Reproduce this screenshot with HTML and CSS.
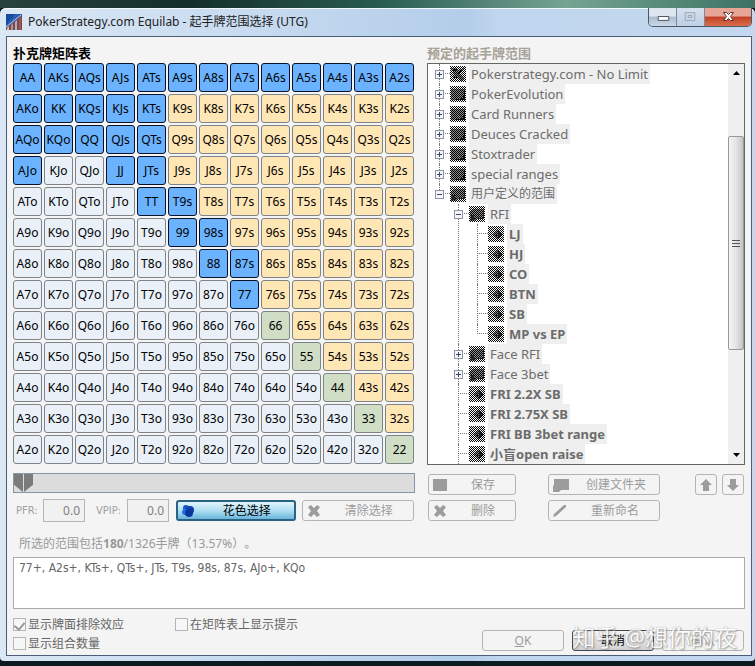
FILE: index.html
```html
<!DOCTYPE html>
<html lang="zh-CN">
<head>
<meta charset="utf-8">
<title>PokerStrategy.com Equilab</title>
<link rel="stylesheet" href="styles.css">
</head>
<body>
<svg class="defs" aria-hidden="true">
  <defs>
    <pattern id="dither" width="2" height="2" patternUnits="userSpaceOnUse">
      <path d="M0 0h1v1H0zM1 1h1v1H1z" fill="#000"/>
      <path d="M1 0h1v1H1zM0 1h1v1H0z" fill="#fff"/>
    </pattern>
    <pattern id="dither-dark" width="2" height="2" patternUnits="userSpaceOnUse">
      <path d="M0 0h1v1H0zM1 1h1v1H1z" fill="#000"/>
      <path d="M1 0h1v1H1zM0 1h1v1H0z" fill="#8c8c8c"/>
    </pattern>
    <symbol id="i-root" viewBox="0 0 16 16">
      <path d="M0 0h16v16H0z" fill="url(#dither)"/>
      <path d="M1 2h5l2 2 6-2-4 6 4 5-3 2-4-4-5 2 2-5z" fill="url(#dither-dark)"/>
      <path d="M3 3h4v2H3zM7 8l4-4 1 1-4 4zM4 11h3v1H4z" fill="#111"/>
    </symbol>
    <symbol id="i-folder" viewBox="0 0 16 16">
      <path d="M0 0h16v16H0z" fill="url(#dither)"/>
      <path d="M1 3h14v11H1z" fill="url(#dither-dark)"/>
      <path d="M14 5h1v9H5v-1h5v-1h3v-2h1z" fill="#111"/>
    </symbol>
    <symbol id="i-user" viewBox="0 0 16 16">
      <path d="M0 0h16v16H0z" fill="url(#dither)"/>
      <path d="M1 6l3-3h11v10H7l-2 2H1z" fill="url(#dither-dark)"/>
      <path d="M14 5h1v8H8v-1h6zM2 9h3v2h1v3H2z" fill="#222"/>
    </symbol>
    <symbol id="i-range" viewBox="0 0 16 16">
      <path d="M0 0h16v16H0z" fill="url(#dither)"/>
      <path d="M9 3l5 5-5 6-5-6z" fill="url(#dither-dark)"/>
      <path d="M10 5l4 3-4 5v-3H8V9h2z" fill="#222"/>
    </symbol>
  </defs>
</svg>

<div class="window">
  <header class="titlebar">
    <svg class="app-icon" viewBox="0 0 16 16" aria-hidden="true">
      <path d="M0 0h16v16H0z" fill="#2a5fb4"/>
      <path d="M0 0h9L0 11z" fill="#174a9c"/>
      <path d="M0 16v-2l16-13v15z" fill="#59546b"/>
      <path d="M1 14l2-2v4H1z" fill="#e7b6a3"/>
      <path d="M5 11l2-2v7H5z" fill="#d9826c"/>
      <path d="M9 8l2-2v10H9z" fill="#c6a7a8"/>
      <path d="M13 5l2-2v13h-2z" fill="#c04b36"/>
      <path d="M0 13L15 1" stroke="#b7c9e8"/>
    </svg>
    <h1 class="caption">PokerStrategy.com Equilab - 起手牌范围选择 (UTG)</h1>
    <div class="window-buttons">
      <button class="wb" aria-label="最小化"><svg viewBox="0 0 28 18"><path d="M9.500 8.500h11v4h-11z" fill="#fff" stroke="#46505e"/></svg></button>
      <button class="wb" aria-label="最大化" disabled><svg viewBox="0 0 28 18"><path d="M8.500 4.500h10v8h-10zM11.500 7.500h4v2h-4z" fill="#cfd9e6" stroke="#98a4b5"/></svg></button>
      <button class="wb wb-close" aria-label="关闭"><svg viewBox="0 0 46 18"><path d="M18.500 4.500h3l2 2 2-2h3l-3 4 3 4h-3l-2-2-2 2h-3l3-4z" fill="#fff" stroke="#5b3033"/></svg></button>
    </div>
  </header>

  <main class="client">
    <div class="columns">
      <section class="left">
        <h2>扑克牌矩阵表</h2>
        <div class="matrix" id="matrix"></div>
        <div class="slider">
          <input type="range" aria-label="PFR 范围" class="lower" min="0" max="100" value="0" disabled>
          <input type="range" aria-label="VPIP 范围" class="upper" min="0" max="100" value="0" disabled>
        </div>
        <div class="stats">
          <label for="pfr">PFR:</label><input id="pfr" type="text" value="0.0" disabled>
          <label for="vpip" class="second">VPIP:</label><input id="vpip" type="text" value="0.0" disabled>
          <button class="btn suits"><svg viewBox="0 0 14 14" aria-hidden="true"><circle cx="5" cy="4" r="3" fill="#1456c8"/><circle cx="9" cy="6" r="4" fill="#0d3fae"/><circle cx="4" cy="8" r="3" fill="#2470dc"/><circle cx="8" cy="9" r="4" fill="#08389c"/></svg><span>花色选择</span></button>
          <button class="btn clear" disabled><svg viewBox="0 0 14 14" aria-hidden="true"><path d="M1 3l3-2 3 3 3-3 3 2-3 4 3 4-3 2-3-3-3 3-3-2 3-4z"/></svg><span>清除选择</span></button>
        </div>
      </section>

      <section class="right">
        <h2 class="muted">预定的起手牌范围</h2>
        <div class="tree-box">
          <ul class="tree">
            <li><div class="node"><button class="toggle" aria-label="展开"></button><svg><use href="#i-root"/></svg><span>Pokerstrategy.com - No Limit</span></div></li>
            <li><div class="node"><button class="toggle" aria-label="展开"></button><svg><use href="#i-folder"/></svg><span>PokerEvolution</span></div></li>
            <li><div class="node"><button class="toggle" aria-label="展开"></button><svg><use href="#i-folder"/></svg><span>Card Runners</span></div></li>
            <li><div class="node"><button class="toggle" aria-label="展开"></button><svg><use href="#i-folder"/></svg><span>Deuces Cracked</span></div></li>
            <li><div class="node"><button class="toggle" aria-label="展开"></button><svg><use href="#i-folder"/></svg><span>Stoxtrader</span></div></li>
            <li><div class="node"><button class="toggle" aria-label="展开"></button><svg><use href="#i-folder"/></svg><span>special ranges</span></div></li>
            <li><div class="node"><button class="toggle open" aria-label="折叠"></button><svg><use href="#i-user"/></svg><span class="cjk">用户定义的范围</span></div>
              <ul>
                <li><div class="node"><button class="toggle open" aria-label="折叠"></button><svg><use href="#i-user"/></svg><span>RFI</span></div>
                  <ul>
                    <li><div class="node leaf"><svg><use href="#i-range"/></svg><span>LJ</span></div></li>
                    <li><div class="node leaf"><svg><use href="#i-range"/></svg><span>HJ</span></div></li>
                    <li><div class="node leaf"><svg><use href="#i-range"/></svg><span>CO</span></div></li>
                    <li><div class="node leaf"><svg><use href="#i-range"/></svg><span>BTN</span></div></li>
                    <li><div class="node leaf"><svg><use href="#i-range"/></svg><span>SB</span></div></li>
                    <li><div class="node leaf"><svg><use href="#i-range"/></svg><span>MP vs EP</span></div></li>
                  </ul>
                </li>
                <li><div class="node"><button class="toggle" aria-label="展开"></button><svg><use href="#i-user"/></svg><span>Face RFI</span></div></li>
                <li><div class="node"><button class="toggle" aria-label="展开"></button><svg><use href="#i-user"/></svg><span>Face 3bet</span></div></li>
                <li><div class="node leaf"><svg><use href="#i-range"/></svg><span>FRI 2.2X SB</span></div></li>
                <li><div class="node leaf"><svg><use href="#i-range"/></svg><span>FRI 2.75X SB</span></div></li>
                <li><div class="node leaf"><svg><use href="#i-range"/></svg><span>FRI BB 3bet range</span></div></li>
                <li class="continues"><div class="node leaf"><svg><use href="#i-range"/></svg><span>小盲open raise</span></div></li>
              </ul>
            </li>
          </ul>
          <div class="scrollbar">
            <button aria-label="向上滚动"><svg viewBox="0 0 7 4"><path d="M0 4l3.500-4L7 4z"/></svg></button>
            <div class="track"><div class="thumb"><svg viewBox="0 0 8 9"><path d="M0 1.500h8M0 4.500h8M0 7.500h8" stroke="#555"/></svg></div></div>
            <button aria-label="向下滚动"><svg viewBox="0 0 7 4"><path d="M0 0l3.500 4L7 0z"/></svg></button>
          </div>
        </div>
        <div class="actions">
          <button class="btn" disabled><svg viewBox="0 0 14 14" aria-hidden="true"><path d="M0 1h14v12H0z"/></svg><span>保存</span></button>
          <button class="btn" disabled><svg class="wide" viewBox="0 0 16 14" aria-hidden="true"><path d="M1 1h15v11H8l-2 2H0V8l1-1z"/></svg><span>创建文件夹</span></button>
          <div class="arrows">
            <button class="btn square" aria-label="上移" disabled><svg viewBox="0 0 14 14"><path d="M7 1l6 6h-3v6H4V7H1z"/></svg></button>
            <button class="btn square" aria-label="下移" disabled><svg viewBox="0 0 14 14"><path d="M7 13l6-6h-3V1H4v6H1z"/></svg></button>
          </div>
          <button class="btn" disabled><svg viewBox="0 0 14 14" aria-hidden="true"><path d="M1 3l3-2 3 3 3-3 3 2-3 4 3 4-3 2-3-3-3 3-3-2 3-4z"/></svg><span>删除</span></button>
          <button class="btn" disabled><svg viewBox="0 0 14 14" aria-hidden="true"><path d="M0 13l1-3L11 1h2v2L3 12z"/></svg><span>重新命名</span></button>
        </div>
      </section>
    </div>

    <p class="summary">所选的范围包括<b>180</b>/1326手牌（13.57%）。</p>
    <textarea class="range-text" aria-label="范围" readonly>77+, A2s+, KTs+, QTs+, JTs, T9s, 98s, 87s, AJo+, KQo</textarea>

    <footer class="footer">
      <div class="checks">
        <label><input type="checkbox" checked disabled>显示牌面排除效应</label>
        <label><input type="checkbox" disabled>在矩阵表上显示提示</label>
        <label><input type="checkbox" disabled>显示组合数量</label>
      </div>
      <div class="dialog-buttons">
        <button class="btn" disabled><span><u>O</u>K</span></button>
        <button class="btn cancel"><span>取消</span></button>
        <button class="btn" disabled><span>确认</span></button>
        <div class="watermark">知乎 @想你的夜</div>
      </div>
    </footer>
  </main>
</div>
<script src="matrix.js"></script>
</body>
</html>
```
FILE: styles.css
```css
* { box-sizing: border-box; }

body {
  margin: 0;
  min-height: 100vh;
  padding: 8px 0 5px;
  background: linear-gradient(90deg, #29413e, #142e2b 25%, #285b50 50%, #75a493 75%, #3c7262) top / 100% 8px no-repeat, #0b1c21;
  font: 12px/20px "Noto Sans", "Noto Sans CJK SC", sans-serif;
  color: #000;
}

.defs { position: absolute; width: 0; height: 0; }

button, input, textarea { font: inherit; color: inherit; margin: 0; }

button { padding: 0; }

h1, h2, p, ul { margin: 0; padding: 0; }

/* Window frame */

.window {
  padding: 0 3px 5px 6px;
  border-radius: 6px 6px 4px 4px;
  background: linear-gradient(90deg, #dbe7f4, #c9dcf0 30%, #b3cdea 62%, #c0d6ee 66%, #c3d8ef);
  box-shadow: inset 0 1px #f2f8fd;
}

.titlebar {
  display: flex;
  align-items: center;
  height: 28px;
}

.app-icon { width: 16px; height: 16px; margin-right: 6px; }

.caption { flex: 1; font-size: 12px; font-weight: 400; color: #222; }

.window-buttons { display: flex; align-self: flex-start; border: 1px solid #4b5868; border-top: 0; border-radius: 0 0 5px 5px; overflow: hidden; }

.wb {
  width: 28px;
  height: 18px;
  border: 0;
  border-right: 1px solid #7d8a9b;
  background: linear-gradient(#dde5ee 45%, #aebccd 50%, #cbd8e7);
}

.wb:disabled { background: linear-gradient(#d5e1ef, #bed0e6); }

.wb-close { width: 46px; border-right: 0; background: linear-gradient(#e6a597 45%, #c33e25 50%, #d96f4d); }

.wb svg { display: block; width: 100%; height: 18px; }

.client { padding: 6px 6px 2px; border: 1px solid #4d5f78; background: #f4f4f4; }

/* Two main columns */

.columns { display: grid; grid-template-columns: 402fr 318fr; gap: 12px; }

.left, .right { display: flex; flex-direction: column; min-width: 0; }

h2 { font-size: 13px; line-height: 20px; font-weight: 700; }

.muted { color: #a5a195; }

.matrix { display: grid; grid-template-columns: repeat(13, 1fr); gap: 2px; padding-right: 1px; }

.hand {
  height: 29px;
  border: 1px solid #7e8388;
  border-radius: 3px;
  background: #e9f0f8;
  text-align: center;
}

.hand.suited { background: #ffe6b5; }

.hand.pair { background: #cfdec5; }

.hand.selected { background: #6bb3ff; border-color: #06122c; }

.slider {
  display: grid;
  height: 20px;
  margin-top: 9px;
  border: 1px solid #8596ab;
  background: #dcdcdc;
}

.slider input { grid-area: 1 / 1; width: auto; min-width: 0; height: 18px; appearance: none; background: none; }

.slider .upper { margin-left: 10px; }

.slider input::-webkit-slider-thumb { appearance: none; width: 9px; height: 18px; background: #7b7b7b; }

.slider .lower::-webkit-slider-thumb { clip-path: polygon(0 0, 100% 0, 100% 100%, 0 60%); }

.slider .upper::-webkit-slider-thumb { clip-path: polygon(0 0, 100% 0, 100% 60%, 0 100%); }

.stats { display: flex; align-items: center; gap: 3px; height: 23px; margin-top: 6px; padding-right: 1px; color: #a0a0a0; }

.stats label { width: 24px; margin-left: 3px; white-space: nowrap; font: 11px/20px "DejaVu Sans Condensed", sans-serif; }

.stats .second { width: 28px; margin-left: 8px; }

.stats input { width: 42px; height: 23px; padding: 0 4px; border: 1px solid #b6b6b6; background: #f1f1f1; text-align: right; color: #808080; }

/* Buttons */

.btn {
  display: flex;
  align-items: center;
  height: 21px;
  padding: 0 4px;
  border: 1px solid #3f464d;
  border-radius: 3px;
  background: linear-gradient(#f6f6f6, #d0d0d0);
}

.btn:disabled { border-color: #b4b4b4; background: #f4f4f4; color: #9c9c9c; }

.btn svg { flex: none; width: 14px; height: 14px; fill: #9c9c9c; }

.btn svg.wide { width: 16px; }

.btn span { flex: 1; text-align: center; line-height: 19px; }

.btn svg + span { padding-left: 8px; }

.btn.suits { flex: 120 1 0; margin-left: 4px; border: 2px solid #2b6283; padding: 0 3px; color: #000; background: linear-gradient(#e2f4fc, #b0def2 50%, #68b6dc); }

.btn.clear { flex: 112 1 0; margin-left: 3px; }

.btn.square { justify-content: center; width: 22px; padding: 0; }

/* Tree of saved ranges */

.tree-box { display: flex; height: 402px; border: 1px solid #65685f; background: #fff; overflow: hidden; }

.tree { flex: 1; padding-left: 2px; font-size: 13px; color: #6c6c6c; }

.tree ul { padding-left: 19px; }

.tree li { position: relative; list-style: none; }

.tree li::before { content: ""; position: absolute; left: 9px; top: 0; bottom: 0; border-left: 1px dotted #777; }

.tree li:last-child::before { bottom: auto; height: 10px; }

.tree li.continues::before { height: 20px; }

.node { position: relative; display: flex; align-items: center; height: 20px; padding-left: 5px; }

.node::before { content: ""; position: absolute; left: 9px; top: 9px; width: 11px; border-top: 1px dotted #777; }

.toggle {
  position: relative;
  width: 9px;
  height: 9px;
  margin-right: 6px;
  border: 1px solid #8c95a6;
  background: linear-gradient(#39466f, #39466f) center / 5px 1px no-repeat, linear-gradient(#39466f, #39466f) center / 1px 5px no-repeat, #f6f6f8;
}

.toggle.open { background: linear-gradient(#39466f, #39466f) center / 5px 1px no-repeat, #f6f6f8; }

.node svg { position: relative; flex: none; width: 16px; height: 16px; shape-rendering: crispEdges; }

.node span { margin-left: 3px; padding: 0 2px; background: #efefef; line-height: 20px; white-space: nowrap; }

.node .cjk { font-size: 12px; }

.leaf { padding-left: 20px; font-weight: 700; }

.scrollbar { display: flex; flex-direction: column; width: 16px; background: #f0f0f0; }

.scrollbar button { display: grid; place-items: center; height: 18px; border: 0; background: none; }

.scrollbar button svg { width: 7px; height: 4px; }

.track { display: grid; flex: 1; grid-template-rows: 54fr 214fr 96fr; }

.thumb {
  grid-row: 2;
  display: grid;
  place-items: center;
  border: 1px solid #999;
  border-radius: 2px;
  background: linear-gradient(90deg, #f5f5f5, #e4e4e4 50%, #c4c4c4);
}

.thumb svg { width: 8px; height: 9px; }

.actions {
  display: grid;
  grid-template-columns: 88fr 112fr 52px;
  gap: 5px 32px;
  margin-top: 9px;
  padding: 0 1px;
}

.arrows { display: flex; justify-content: flex-end; gap: 5px; }

/* Lower part */

.summary { padding: 12px 6px 3px; color: #999; text-spacing-trim: space-all; }

.range-text {
  display: block;
  width: 100%;
  height: 52px;
  padding: 0 5px;
  border: 1px solid #aaa;
  background: #fff;
  color: #666;
  font: 12px/20px "DejaVu Sans Condensed", sans-serif;
  resize: none;
}

.footer { display: flex; justify-content: space-between; margin-top: 6px; }

.checks { display: grid; grid-template-columns: 162px auto; color: #666; }

.checks label { display: flex; align-items: center; gap: 2px; height: 19px; }

.checks input { display: grid; place-items: center; appearance: none; width: 13px; height: 13px; border: 1px solid #b5b5b5; background: #f7f7f7; }

.checks input:checked::before {
  content: "";
  width: 5px;
  height: 8px;
  border: solid #999;
  border-width: 0 2px 2px 0;
  transform: rotate(40deg);
}

.dialog-buttons { position: relative; display: flex; gap: 8px; align-self: flex-end; padding: 0 1px 2px 0; }

.dialog-buttons .btn { width: 82px; }

.watermark {
  position: absolute;
  right: 8px;
  bottom: 0;
  font-size: 23px;
  line-height: 32px;
  color: #fff;
  opacity: .75;
  text-shadow: 1px 1px 2px #777, 0 0 1px #888;
  white-space: nowrap;
  pointer-events: none;
}
```
FILE: matrix.js
```js
const ranks = "AKQJT98765432";
const selected = new Set([
  "AA", "KK", "QQ", "JJ", "TT", "99", "88", "77",
  ...[...ranks.slice(1)].map(r => "A" + r + "s"),
  "KQs", "KJs", "KTs", "QJs", "QTs", "JTs", "T9s", "98s", "87s",
  "AKo", "AQo", "AJo", "KQo"
]);
const matrix = document.getElementById("matrix");

for (let row = 0; row < 13; row++) {
  for (let col = 0; col < 13; col++) {
    const high = ranks[Math.min(row, col)];
    const low = ranks[Math.max(row, col)];
    const kind = row === col ? "pair" : col > row ? "suited" : "offsuit";
    const name = high + low + { pair: "", suited: "s", offsuit: "o" }[kind];
    const cell = document.createElement("button");
    cell.className = "hand " + kind + (selected.has(name) ? " selected" : "");
    cell.textContent = name;
    matrix.append(cell);
  }
}
```
